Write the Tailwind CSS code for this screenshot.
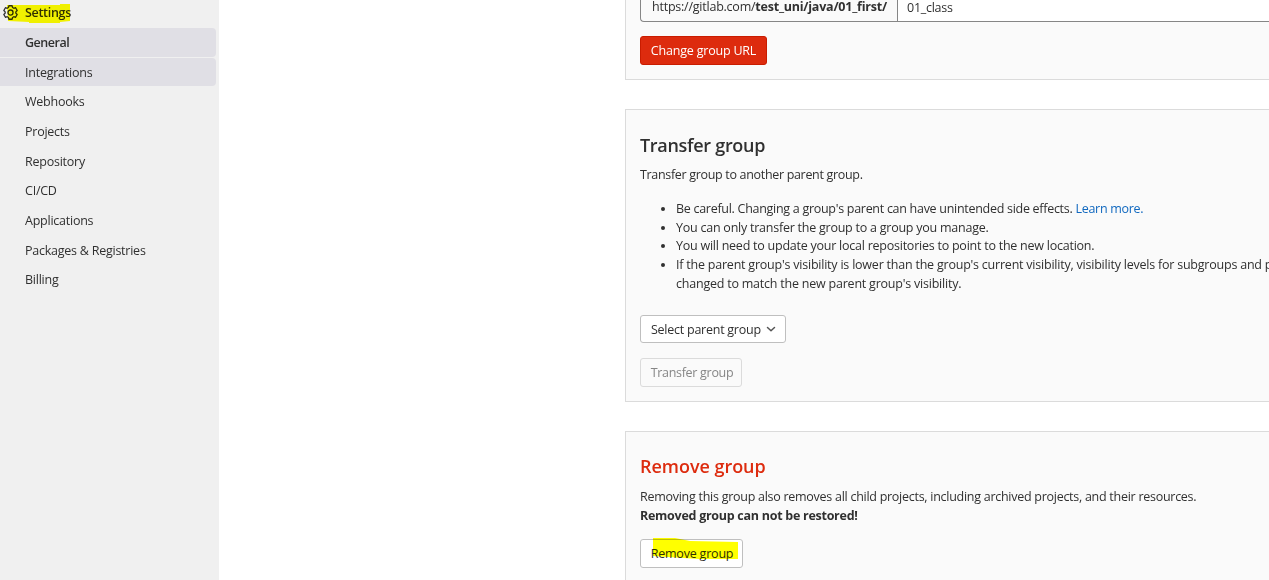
<!DOCTYPE html>
<html lang="en">

<head>
    <meta charset="UTF-8">
    <meta name="viewport" content="width=device-width, initial-scale=1.0">
    <title>General Settings</title>
    <script src="https://cdn.jsdelivr.net/npm/@tailwindcss/browser@4"></script>
</head>

<body class="flex h-screen overflow-hidden bg-white font-['Open_Sans','Noto_Sans',sans-serif] text-[12.5px] leading-[18.75px] text-[#303030]">
    <!-- Sidebar -->
    <aside class="w-[219px] shrink-0 bg-[#f0f0f0]">
        <a href="#" class="relative flex h-7 items-start gap-[7px] pt-[4px] pl-[3px] font-semibold tracking-[-0.3px]">
            <svg class="mt-px h-[15px] w-[15px]" viewBox="0 0 16 16" fill="none" stroke="currentColor" stroke-width="1.4" stroke-linejoin="round">
                <path d="M6.3.8h3.4l.5 1.9 1.3.8 1.9-.6 1.7 3-1.4 1.4v1.4l1.4 1.4-1.7 3-1.9-.6-1.3.8-.5 1.9H6.3l-.5-1.9-1.3-.8-1.9.6-1.7-3 1.4-1.4V7.3L.9 5.9l1.7-3 1.9.6 1.3-.8z" />
                <circle cx="8" cy="8" r="2.7" />
            </svg>
            <span>Settings</span>
            <svg class="absolute top-0 left-0 mix-blend-multiply" width="74" height="26" fill="#ffff00">
                <path d="M7 5h40l13 0V4h10v17l-10 1v1H29v-1L8 21z" />
            </svg>
        </a>
        <nav class="flex flex-col gap-px tracking-[-0.24px]">
            <a href="#" class="mr-[3px] flex h-[28.67px] items-center rounded-r bg-[#e0dfe5] pt-[2px] pl-[25px] font-semibold tracking-[-0.45px]">General</a>
            <a href="#" class="mr-[3px] flex h-[28.67px] items-center rounded-r bg-[#e0dfe5] pt-[2px] pl-[25px]">Integrations</a>
            <a href="#" class="mr-[3px] flex h-[28.67px] items-center pt-[2px] pl-[25px]">Webhooks</a>
            <a href="#" class="mr-[3px] flex h-[28.67px] items-center pt-[2px] pl-[25px]">Projects</a>
            <a href="#" class="mr-[3px] flex h-[28.67px] items-center pt-[2px] pl-[25px]">Repository</a>
            <a href="#" class="mr-[3px] flex h-[28.67px] items-center pt-[2px] pl-[25px]">CI/CD</a>
            <a href="#" class="mr-[3px] flex h-[28.67px] items-center pt-[2px] pl-[25px]">Applications</a>
            <a href="#" class="mr-[3px] flex h-[28.67px] items-center pt-[2px] pl-[25px]">Packages &amp; Registries</a>
            <a href="#" class="mr-[3px] flex h-[28.67px] items-center pt-[2px] pl-[25px]">Billing</a>
        </nav>
    </aside>

    <main class="ml-[406px] flex min-w-0 grow flex-col gap-[29px] overflow-hidden tracking-[-0.27px]">
        <!-- Group URL -->
        <section class="h-20 shrink-0 border border-t-0 border-r-0 border-[#dbdbdb] bg-[#fafafa] pl-[14px]">
            <div class="flex h-[22px] rounded-bl border border-t-0 border-r-0 border-[#868686]">
                <div class="w-[257px] shrink-0 border-r border-[#868686] pl-[11px] leading-[13px] tracking-[-0.23px] whitespace-nowrap">https://gitlab.com/<b>test_uni/java/01_first/</b></div>
                <div class="grow bg-white pl-[9px] leading-[15px]">01_class</div>
            </div>
            <button class="mt-[14px] block h-[29px] w-[127px] rounded-[3px] border border-[#c91c00] bg-[#dd2b0e] pt-[2px] tracking-[-0.2px] text-white">Change group URL</button>
        </section>

        <!-- Transfer -->
        <section class="h-[293px] shrink-0 border border-r-0 border-[#dbdbdb] bg-[#fafafa] pl-[14px]">
            <h4 class="mt-[23px] text-lg leading-6 font-semibold tracking-[-0.3px]">Transfer group</h4>
            <p class="mt-[9px] tracking-[-0.32px]">Transfer group to another parent group.</p>
            <ul class="mt-[15px] list-disc pl-9 tracking-[-0.24px] whitespace-nowrap">
                <li class="tracking-[-0.285px]">Be careful. Changing a group's parent can have unintended side effects. <a href="#" class="text-[#1068bf]">Learn more.</a></li>
                <li>You can only transfer the group to a group you manage.</li>
                <li>You will need to update your local repositories to point to the new location.</li>
                <li class="tracking-[-0.22px]">If the parent group's visibility is lower than the group's current visibility, visibility levels for subgroups and projects will be<br>changed to match the new parent group's visibility.</li>
            </ul>
            <button class="mt-[21px] flex h-7 w-[146px] items-center justify-between rounded-[3px] border border-[#bfbfbf] bg-white px-[10px] tracking-[-0.25px]">
                <span class="pt-[3px]">Select parent group</span>
                <svg class="-mr-px h-[10px] w-[10px]" viewBox="0 0 10 10" fill="none" stroke="#555" stroke-width="1.5" stroke-linecap="round" stroke-linejoin="round">
                    <path d="M1.5 3.5 5 6.8l3.5-3.3" />
                </svg>
            </button>
            <button class="mt-[15px] block h-[29px] w-[102px] rounded-[3px] border border-[#dbdbdb] pt-[2px] pl-[2px] text-[#868686] tracking-[-0.3px]" disabled>Transfer group</button>
        </section>

        <!-- Remove -->
        <section class="h-[160px] shrink-0 border border-r-0 border-[#dbdbdb] bg-[#fafafa] pl-[14px]">
            <h4 class="mt-[22px] text-lg leading-6 font-semibold tracking-[-0.03px] text-[#dd2b0e]">Remove group</h4>
            <p class="mt-[10px]">Removing this group also removes all child projects, including archived projects, and their resources.<br><b>Removed group can not be restored!</b></p>
            <button class="relative mt-[13px] block h-[29px] w-[103px] rounded-[3px] border border-[#bfbfbf] bg-white pt-[2px] pl-px tracking-[-0.2px]">
                Remove group
                <svg class="absolute -top-[2px] -left-px mix-blend-multiply" width="103" height="24" fill="#ffff00">
                    <path d="M13 0h22l10 2 5 1 48 1v17H59l-16-1-30-2z" />
                </svg>
            </button>
        </section>
    </main>
</body>

</html>
